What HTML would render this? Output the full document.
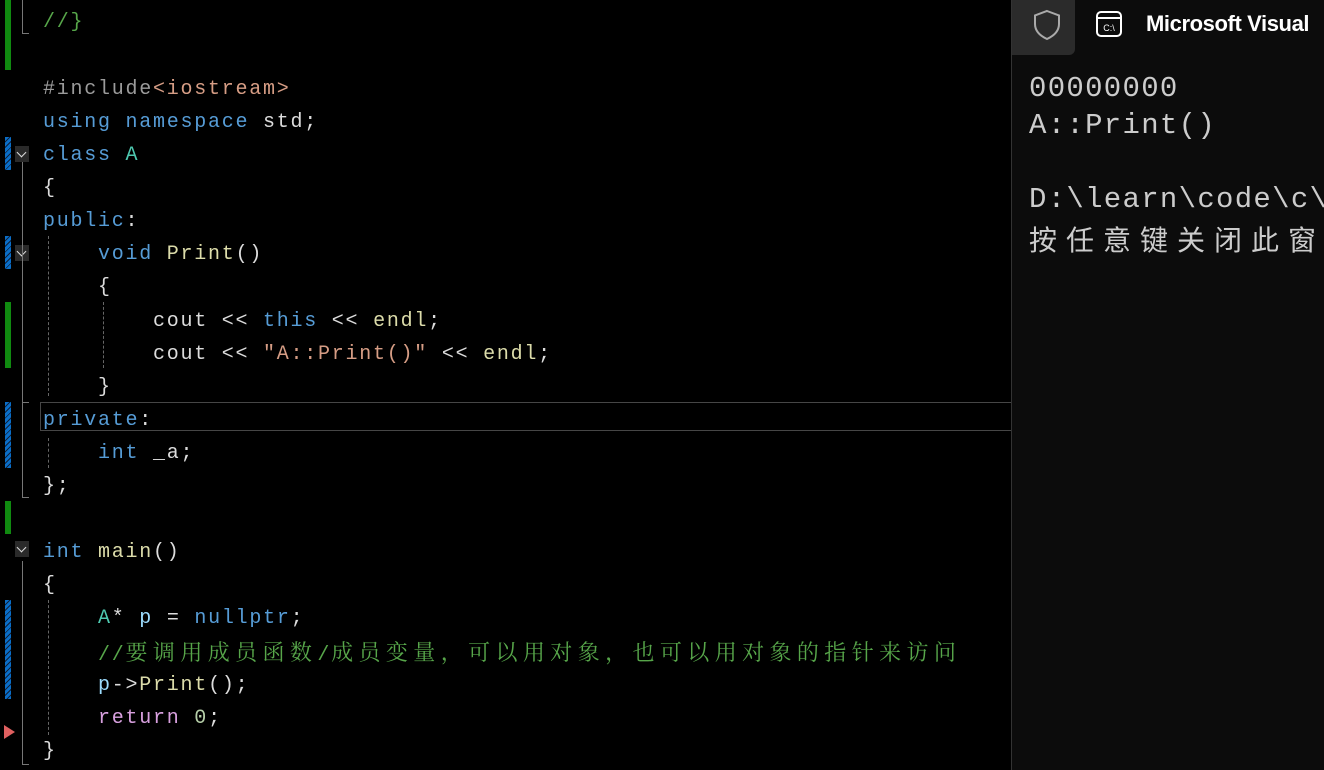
<!DOCTYPE html>
<html><head><meta charset="utf-8"><style>
html,body{margin:0;padding:0;background:#000;width:1324px;height:770px;overflow:hidden;position:relative}
#code{position:absolute;left:0;top:0;width:1011px;height:770px;background:#000}
.l{position:absolute;left:43px;height:33px;line-height:33px;font-family:"Liberation Mono","Noto Sans CJK SC",monospace;font-size:20px;letter-spacing:1.75px;color:#dcdcdc;white-space:pre;margin-top:2px}
.k{color:#569cd6}.t{color:#4ec9b0}.f{color:#dcdcaa}.c{color:#57a64a}.s{color:#d69d85}.p{color:#9b9b9b}.v{color:#9cdcfe}.r{color:#d8a0df}.n{color:#b5cea8}
.cj{font-family:"Noto Serif CJK SC","Noto Sans CJK SC",serif;font-size:22px;letter-spacing:5.4px}
.g{position:absolute;left:5px;width:6px;background:#108a10}
.b{position:absolute;left:5px;width:6px;background:repeating-linear-gradient(135deg,#0a6ec8 0 3px,#10213a 3px 4px)}
.box{position:absolute;left:15px;width:14px;height:16px;background:#2a2a2a}
.box:after{content:"";position:absolute;left:3px;top:3px;width:6px;height:6px;border-right:1.5px solid #ddd;border-bottom:1.5px solid #ddd;transform:rotate(45deg)}
.vl{position:absolute;width:0;border-left:1px solid #777}
.dl{position:absolute;width:0;border-left:1px dashed #666}
#con{position:absolute;left:1012px;top:0;width:312px;height:770px;background:#0c0c0c}
.ct{position:absolute;left:17px;font-family:"Liberation Mono","Noto Sans CJK SC",monospace;font-size:29px;letter-spacing:1.3px;color:#cccccc;white-space:pre}
</style></head><body>
<div id="code">
<div class="g" style="top:0;height:70px"></div>
<div class="b" style="top:137px;height:33px"></div>
<div class="box" style="top:146px"></div>
<div class="b" style="top:236px;height:33px"></div>
<div class="box" style="top:245px"></div>
<div class="g" style="top:302px;height:66px"></div>
<div class="b" style="top:402px;height:66px"></div>
<div class="g" style="top:501px;height:33px"></div>
<div class="box" style="top:541px"></div>
<div class="b" style="top:600px;height:99px"></div>
<div style="position:absolute;left:4px;top:725px;width:0;height:0;border-top:7px solid transparent;border-bottom:7px solid transparent;border-left:11px solid #e06060"></div>
<div class="vl" style="left:22px;top:0;height:34px"></div><div style="position:absolute;left:22px;top:33px;width:7px;border-top:1px solid #777"></div>
<div class="vl" style="left:22px;top:162px;height:336px"></div><div style="position:absolute;left:22px;top:497px;width:7px;border-top:1px solid #777"></div>
<div style="position:absolute;left:22px;top:402px;width:7px;border-top:1px solid #777"></div>
<div class="vl" style="left:22px;top:561px;height:204px"></div><div style="position:absolute;left:22px;top:764px;width:7px;border-top:1px solid #777"></div>
<div class="dl" style="left:48px;top:236px;height:160px"></div>
<div class="dl" style="left:48px;top:438px;height:30px"></div>
<div class="dl" style="left:48px;top:600px;height:135px"></div>
<div class="dl" style="left:103px;top:302px;height:66px"></div>
<div style="position:absolute;left:40px;top:402px;width:971px;height:27px;border:1.5px solid #464646;border-right:none"></div>
<div class="l c" style="top:4px">//}</div>
<div class="l" style="top:71px"><span class="p">#include</span><span class="s">&lt;iostream&gt;</span></div>
<div class="l" style="top:104px"><span class="k">using namespace</span> std;</div>
<div class="l" style="top:137px"><span class="k">class</span> <span class="t">A</span></div>
<div class="l" style="top:170px">{</div>
<div class="l k" style="top:203px">public<span style="color:#dcdcdc">:</span></div>
<div class="l" style="top:236px">    <span class="k">void</span> <span class="f">Print</span>()</div>
<div class="l" style="top:269px">    {</div>
<div class="l" style="top:303px">        cout &lt;&lt; <span class="k">this</span> &lt;&lt; <span class="f">endl</span>;</div>
<div class="l" style="top:336px">        cout &lt;&lt; <span class="s">"A::Print()"</span> &lt;&lt; <span class="f">endl</span>;</div>
<div class="l" style="top:369px">    }</div>
<div class="l k" style="top:402px">private<span style="color:#dcdcdc">:</span></div>
<div class="l" style="top:435px">    <span class="k">int</span> _a;</div>
<div class="l" style="top:468px">};</div>
<div class="l" style="top:534px"><span class="k">int</span> <span class="f">main</span>()</div>
<div class="l" style="top:567px">{</div>
<div class="l" style="top:600px">    <span class="t">A</span>* <span class="v">p</span> = <span class="k">nullptr</span>;</div>
<div class="l c" style="top:633px">    //<span class="cj">要调用成员函数</span>/<span class="cj">成员变量，可以用对象，也可以用对象的指针来访问</span></div>
<div class="l" style="top:667px">    <span class="v">p</span>-&gt;<span class="f">Print</span>();</div>
<div class="l" style="top:700px">    <span class="r">return</span> <span class="n">0</span>;</div>
<div class="l" style="top:733px">}</div>
</div>
<div style="position:absolute;left:1011px;top:0;width:1px;height:770px;background:#333"></div>
<div id="con">
<div style="position:absolute;left:0;top:0;width:63px;height:55px;background:#2b2b2b;border-bottom-right-radius:6px"></div>
<svg style="position:absolute;left:20px;top:9px" width="30" height="32" viewBox="0 0 30 32"><path d="M15 2 L27 6.5 V15 C27 22 21.5 27 15 30 C8.5 27 3 22 3 15 V6.5 Z" fill="none" stroke="#aaa" stroke-width="2"/></svg>
<svg style="position:absolute;left:83px;top:10px" width="28" height="28" viewBox="0 0 28 28"><rect x="2" y="2" width="24" height="24" rx="4" fill="none" stroke="#fff" stroke-width="2"/><line x1="2" y1="8" x2="26" y2="8" stroke="#fff" stroke-width="2"/><text x="14" y="21" fill="#fff" font-family="Liberation Sans,sans-serif" font-size="9" text-anchor="middle">C:\</text></svg>
<div style="position:absolute;left:134px;top:11px;font-family:'Liberation Sans',sans-serif;font-size:22px;font-weight:bold;letter-spacing:-0.4px;color:#fff;white-space:nowrap">Microsoft Visual</div>
<div class="ct" style="top:72px">00000000</div>
<div class="ct" style="top:109px">A::Print()</div>
<div class="ct" style="top:183px">D:\learn\code\c\</div>
<div class="ct" style="top:219px;font-family:'Noto Sans CJK SC',sans-serif;font-size:28px;letter-spacing:9px">按任意键关闭此窗</div>
</div>
</body></html>
